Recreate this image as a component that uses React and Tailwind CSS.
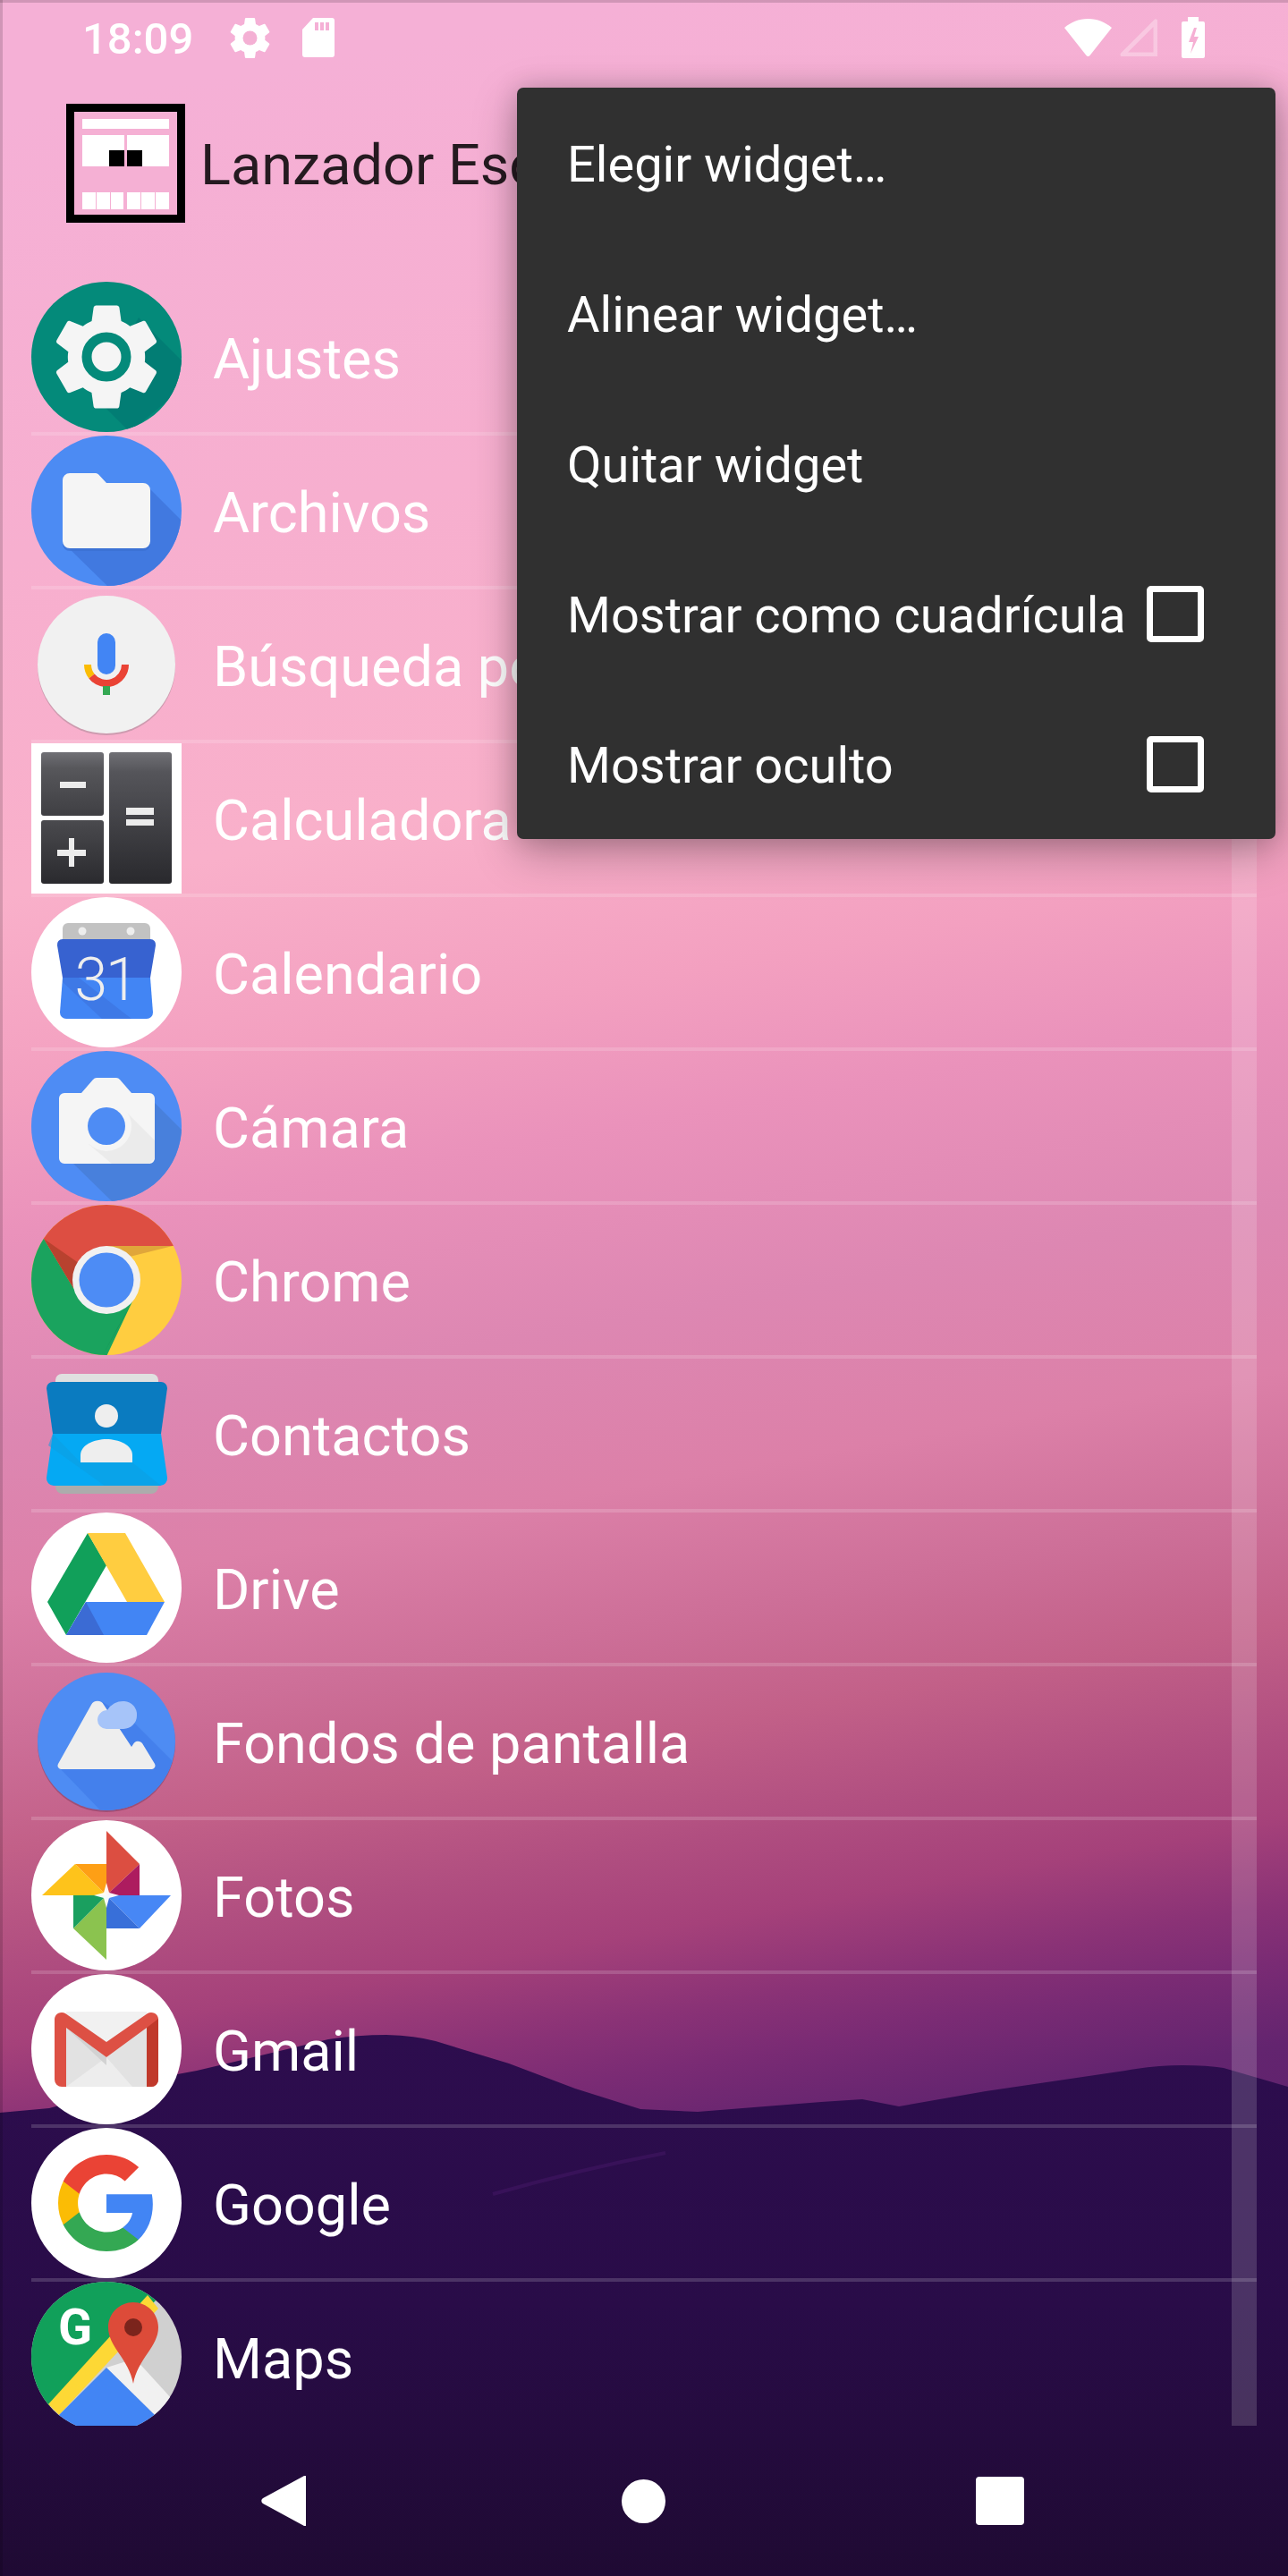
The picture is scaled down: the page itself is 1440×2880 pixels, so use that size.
const GEAR = 'M19.14,12.94c0.04-0.3,0.06-0.61,0.06-0.94c0-0.32-0.02-0.64-0.07-0.94l2.03-1.58c0.18-0.14,0.23-0.41,0.12-0.61l-1.92-3.32c-0.12-0.22-0.37-0.29-0.59-0.22l-2.39,0.96c-0.5-0.38-1.03-0.7-1.62-0.94L14.4,2.81c-0.04-0.24-0.24-0.41-0.48-0.41h-3.84c-0.24,0-0.43,0.17-0.47,0.41L9.25,5.35C8.66,5.59,8.12,5.92,7.63,6.29L5.24,5.33c-0.22-0.08-0.47,0-0.59,0.22L2.74,8.87C2.62,9.08,2.66,9.34,2.86,9.48l2.03,1.58C4.84,11.36,4.8,11.69,4.8,12s0.02,0.64,0.07,0.94l-2.03,1.58c-0.18,0.14-0.23,0.41-0.12,0.61l1.92,3.32c0.12,0.22,0.37,0.29,0.59,0.22l2.39-0.96c0.5,0.38,1.03,0.7,1.62,0.94l0.36,2.54c0.05,0.24,0.24,0.41,0.48,0.41h3.84c0.24,0,0.44-0.17,0.47-0.41l0.36-2.54c0.59-0.24,1.13-0.56,1.62-0.94l2.39,0.96c0.22,0.08,0.47,0,0.59-0.22l1.92-3.32c0.12-0.22,0.07-0.47-0.12-0.61L19.14,12.94z'

function Icon({ children, id, r = 84 }) {
  return (
    <svg viewBox="0 0 168 168" className="w-[168px] h-[168px] shrink-0">
      <defs>
        <clipPath id={id}>
          <circle cx="84" cy="84" r={r} />
        </clipPath>
      </defs>
      {children}
    </svg>
  )
}

function SettingsIcon() {
  return (
    <Icon id="c-settings">
      <circle cx="84" cy="84" r="84" fill="#048a7a" />
      <polygon points="120,40 168,88 168,120 110,168 72,130" fill="#027d74" clipPath="url(#c-settings)" />
      <path d={GEAR} transform="translate(12 12) scale(6)" fill="#f5f5f5" />
      <circle cx="84" cy="84" r="22" fill="none" stroke="#048a7a" strokeWidth="11" />
    </Icon>
  )
}

function FilesIcon() {
  return (
    <Icon id="c-files">
      <circle cx="84" cy="84" r="84" fill="#4c8bf3" />
      <polygon points="133,60 168,95 168,168 85,168 40,124" fill="#4179e0" clipPath="url(#c-files)" />
      <rect x="35" y="112" width="98" height="17" rx="8" fill="#3a6fd0" opacity=".7" />
      <path d="M43 42h29a4 4 0 0 1 3.2 1.6L84 53h41a8 8 0 0 1 8 8v57a8 8 0 0 1-8 8H43a8 8 0 0 1-8-8V50a8 8 0 0 1 8-8z" fill="#f5f5f5" />
    </Icon>
  )
}

function VoiceIcon() {
  return (
    <Icon id="c-voice">
      <circle cx="84" cy="86" r="77" fill="#a98a98" opacity=".55" />
      <circle cx="84" cy="84" r="77" fill="#f1f1f1" />
      <rect x="74" y="49" width="20" height="46" rx="10" fill="#4285f4" />
      <path d="M63 84a21 21 0 0 0 4.5 13" fill="none" stroke="#fbbc05" strokeWidth="8" />
      <path d="M67.5 97A21 21 0 0 0 105 84" fill="none" stroke="#ea4335" strokeWidth="8" />
      <rect x="80" y="108" width="8" height="10" fill="#34a853" />
    </Icon>
  )
}

function CalculatorIcon() {
  return (
    <Icon id="c-calc">
      <defs>
        <linearGradient id="k1" x1="0" y1="0" x2="0" y2="1">
          <stop offset="0" stopColor="#707075" />
          <stop offset=".25" stopColor="#57575b" />
          <stop offset="1" stopColor="#3f3f43" />
        </linearGradient>
        <linearGradient id="k2" x1="0" y1="0" x2="0" y2="1">
          <stop offset="0" stopColor="#4a4a4e" />
          <stop offset="1" stopColor="#2a2a2e" />
        </linearGradient>
        <linearGradient id="k3" x1="0" y1="0" x2="0" y2="1">
          <stop offset="0" stopColor="#707075" />
          <stop offset=".15" stopColor="#55555a" />
          <stop offset="1" stopColor="#29292d" />
        </linearGradient>
      </defs>
      <rect width="168" height="168" fill="#fff" />
      <rect x="11" y="10" width="70" height="71" rx="3" fill="url(#k1)" />
      <rect x="11" y="86" width="70" height="71" rx="3" fill="url(#k2)" />
      <rect x="87" y="10" width="70" height="147" rx="3" fill="url(#k3)" />
      <rect x="32" y="43" width="29" height="7" fill="#ececec" />
      <rect x="29" y="119" width="32" height="7" fill="#ececec" />
      <rect x="42" y="106" width="6" height="32" fill="#ececec" />
      <rect x="106" y="72" width="31" height="8" fill="#ececec" />
      <rect x="106" y="85" width="31" height="7" fill="#ececec" />
    </Icon>
  )
}

function CalendarIcon() {
  return (
    <Icon id="c-cal">
      <circle cx="84" cy="84" r="84" fill="#fff" />
      <path d="M41 29h86a6 6 0 0 1 6 6v14H35V35a6 6 0 0 1 6-6z" fill="#c2c2c2" />
      <circle cx="57" cy="38" r="4.5" fill="#eee" />
      <circle cx="111" cy="38" r="4.5" fill="#eee" />
      <path d="M35 47h98a6 6 0 0 1 6 7l-6 36H35l-6-36a6 6 0 0 1 6-7z" fill="#3762d0" />
      <path d="M35 90h98l3 39a7 7 0 0 1-7 7H39a7 7 0 0 1-7-7z" fill="#4285f4" />
      <polygon points="35,90 53,90 112,136 79,136 35,95" fill="#3e79e6" />
      <text x="83" y="115" textAnchor="middle" fontFamily="Roboto, sans-serif" fontWeight="300" fontSize="66" fill="#eeeeee" letterSpacing="-2">31</text>
    </Icon>
  )
}

function CameraIcon() {
  return (
    <Icon id="c-cam">
      <circle cx="84" cy="84" r="84" fill="#4e8cf4" />
      <polygon points="130,50 168,88 168,168 90,168 45,124" fill="#4880dc" clipPath="url(#c-cam)" />
      <path d="M56 47l13-15a6 6 0 0 1 4-2h22a6 6 0 0 1 4 2l13 15h20a6 6 0 0 1 6 6v67a6 6 0 0 1-6 6H37a6 6 0 0 1-6-6V53a6 6 0 0 1 6-6z" fill="#f5f5f5" />
      <polygon points="104,66 138,100 138,120 132,126 90,126 64,104" fill="#ebebeb" />
      <circle cx="84" cy="84" r="28" fill="#f5f5f5" />
      <circle cx="84" cy="84" r="21" fill="#4e8cf4" />
    </Icon>
  )
}

function ChromeIcon() {
  return (
    <Icon id="c-chrome">
      <g clipPath="url(#c-chrome)">
        <rect width="168" height="168" fill="#ffcd40" />
        <polygon points="-10,-10 178,-10 178,46 84,46 47,93 14,38 -10,38" fill="#dd4e42" />
        <polygon points="-10,38 14,38 47,93 84,122 113,108 80,178 -10,178" fill="#1aa35e" />
        <polygon points="14,38 47,93 60,70" fill="#b8422f" />
        <polygon points="84,46 158,46 110,58" fill="#e0a63a" />
        <polygon points="113,108 80,168 95,140" fill="#128a4e" />
      </g>
      <circle cx="84" cy="84" r="38" fill="#f1f1f1" />
      <circle cx="84" cy="84" r="30.5" fill="#4d8cf5" />
    </Icon>
  )
}

function ContactsIcon() {
  return (
    <Icon id="c-contacts">
      <path d="M34 17h101a7 7 0 0 1 7 7v10H27V24a7 7 0 0 1 7-7z" fill="#e0e0e0" />
      <path d="M27 130h115v13a8 8 0 0 1-8 8H35a8 8 0 0 1-8-8z" fill="#acacac" />
      <path d="M24 26h121a7 7 0 0 1 7 7l-7 51H24l-7-51a7 7 0 0 1 7-7z" fill="#0a7bc0" />
      <path d="M24 84h121l7 49a8 8 0 0 1-8 9H25a8 8 0 0 1-8-9z" fill="#05a9f3" />
      <polygon points="24,84 55,116 113,116 145,142 82,142 19,97" fill="#0d9fe0" opacity=".55" />
      <circle cx="84" cy="64" r="13" fill="#eee" />
      <path d="M55 116v-8c0-12 16-18 29-18s29 6 29 18v8z" fill="#eee" />
    </Icon>
  )
}

function DriveIcon() {
  return (
    <Icon id="c-drive">
      <circle cx="84" cy="84" r="84" fill="#fff" />
      <polygon points="63,23 84,59 39,137 18,100" fill="#11a05a" />
      <polygon points="63,23 105,23 149,100 107,100" fill="#ffcd40" />
      <polygon points="61,100 149,100 129,137 39,137" fill="#4285f4" />
      <polygon points="61,100 39,137 81,137" fill="#3b6bd4" />
    </Icon>
  )
}

function WallpapersIcon() {
  return (
    <Icon id="c-wall" r={77}>
      <circle cx="84" cy="86" r="77" fill="#7a3a60" opacity=".5" />
      <circle cx="84" cy="84" r="77" fill="#4e8cf3" />
      <polygon points="112,60 168,116 161,161 84,168 30,112 80,40" fill="#4480ec" clipPath="url(#c-wall)" />
      <path d="M67 43a8 8 0 0 1 14 0l31 47 2-3a6 6 0 0 1 10-1l14 23a4 4 0 0 1-3 6H33a4 4 0 0 1-3-6z" fill="#eeeeee" />
      <path d="M104 39a15 15 0 0 1 14 16 15 15 0 0 1-15 15H84a10 10 0 0 1-10-10 11 11 0 0 1 11-11 20 20 0 0 1 19-10z" fill="#a6c4f9" />
    </Icon>
  )
}

function PhotosIcon() {
  return (
    <Icon id="c-photos">
      <circle cx="84" cy="84" r="84" fill="#fff" />
      <polygon points="84,12 121,49 84,84" fill="#dc4e41" />
      <polygon points="121,49 121,84 84,84" fill="#ad1c5f" />
      <polygon points="12,84 49,49 84,84" fill="#fec31b" />
      <polygon points="49,49 84,49 84,84" fill="#fe9f15" />
      <polygon points="84,84 156,84 121,121" fill="#4787f5" />
      <polygon points="84,84 121,121 84,121" fill="#386fd9" />
      <polygon points="84,156 47,121 84,84" fill="#8bc34f" />
      <polygon points="47,121 47,84 84,84" fill="#1a9f5f" />
      <polygon points="84,70 87,81 98,84 87,87 84,98 81,87 70,84 81,81" fill="#fff" opacity=".95" />
    </Icon>
  )
}

function GmailIcon() {
  return (
    <Icon id="c-gmail">
      <circle cx="84" cy="84" r="84" fill="#fff" />
      <rect x="39" y="42" width="90" height="84" fill="#f1f1f1" />
      <polygon points="39,126 39,56 84,93 129,56 129,126" fill="#e2e2e2" />
      <polygon points="39,126 84,93 113,126" fill="#ededed" />
      <polygon points="39,60 84,93 84,102" fill="#d2d2d2" />
      <path d="M26 50a8 8 0 0 1 12-6l46 32 46-32a8 8 0 0 1 12 6v68a8 8 0 0 1-8 8h-5V60L84 93 39 60v66h-5a8 8 0 0 1-8-8z" fill="#dd5044" />
      <path d="M129 60l13-10v68a8 8 0 0 1-8 8h-5z" fill="#c0392b" />
    </Icon>
  )
}

function GoogleIcon() {
  return (
    <Icon id="c-google">
      <circle cx="84" cy="84" r="84" fill="#fff" />
      <g transform="translate(25.1 25.1) scale(2.4545)">
        <path fill="#4285f4" d="M45.12 24.5c0-1.56-.14-3.06-.4-4.5H24v8.51h11.84c-.51 2.75-2.06 5.08-4.39 6.64v5.52h7.11c4.16-3.83 6.56-9.47 6.56-16.17z" />
        <path fill="#34a853" d="M24 46c5.94 0 10.92-1.97 14.56-5.33l-7.11-5.52c-1.97 1.32-4.49 2.1-7.45 2.1-5.73 0-10.58-3.87-12.31-9.07H4.34v5.7C7.96 41.07 15.4 46 24 46z" />
        <path fill="#fbbc05" d="M11.69 28.18C11.25 26.86 11 25.45 11 24s.25-2.86.69-4.18v-5.7H4.34C2.85 17.09 2 20.45 2 24c0 3.55.85 6.91 2.34 9.88l7.35-5.7z" />
        <path fill="#ea4335" d="M24 10.75c3.23 0 6.13 1.11 8.41 3.29l6.31-6.31C34.91 4.18 29.93 2 24 2 15.4 2 7.96 6.93 4.34 14.12l7.35 5.7c1.73-5.2 6.58-9.07 12.31-9.07z" />
      </g>
    </Icon>
  )
}

function MapsIcon() {
  return (
    <Icon id="c-maps">
      <g clipPath="url(#c-maps)">
        <rect width="168" height="168" fill="#d0d0d0" />
        <polygon points="0,0 140,0 139,21 20,140 0,140" fill="#11a05a" />
        <polygon points="130,15 142,30 31,149 19,137" fill="#fdd835" />
        <polygon points="84,96 116,86 158,132 138,149" fill="#f1f1f1" />
        <polygon points="84,96 138,149 150,168 18,168 31,149" fill="#4285f4" />
      </g>
      <text x="49" y="70" textAnchor="middle" fontFamily="Roboto, sans-serif" fontWeight="700" fontSize="56" fill="#fff">G</text>
      <path d="M114 23c-15 0-28 12-28 28 0 22 23 35 28 63 5-28 28-41 28-63 0-16-13-28-28-28z" fill="#dd4b39" />
      <circle cx="114" cy="51" r="10" fill="#7b241c" />
    </Icon>
  )
}

const apps = [
  { name: 'Ajustes', Icon: SettingsIcon },
  { name: 'Archivos', Icon: FilesIcon },
  { name: 'Búsqueda por voz', Icon: VoiceIcon },
  { name: 'Calculadora', Icon: CalculatorIcon },
  { name: 'Calendario', Icon: CalendarIcon },
  { name: 'Cámara', Icon: CameraIcon },
  { name: 'Chrome', Icon: ChromeIcon },
  { name: 'Contactos', Icon: ContactsIcon },
  { name: 'Drive', Icon: DriveIcon },
  { name: 'Fondos de pantalla', Icon: WallpapersIcon },
  { name: 'Fotos', Icon: PhotosIcon },
  { name: 'Gmail', Icon: GmailIcon },
  { name: 'Google', Icon: GoogleIcon },
  { name: 'Maps', Icon: MapsIcon },
]

const menuItems = [
  { label: 'Elegir widget…' },
  { label: 'Alinear widget…' },
  { label: 'Quitar widget' },
  { label: 'Mostrar como cuadrícula', check: true },
  { label: 'Mostrar oculto', check: true },
]

function Wallpaper() {
  return (
    <div className="absolute inset-0 bg-[linear-gradient(170deg,#f5b0d6_4%,#f7afcf_20%,#f9b0ca_32%,#f3a0c0_39%,#ea92bb_44%,#dd87b2_51%,#dc80a8_57%,#cd6f98_62%,#c26088_66%,#b04e80_70%,#a5417a_73%,#8a3276_76%,#7a2b74_78%,#63246f_81%,#4a1c60_100%)]">
      <svg viewBox="0 2260 1440 620" className="absolute left-0 bottom-0 w-[1440px] h-[620px]">
        <defs>
          <linearGradient id="hill" x1="0" y1="0" x2="0" y2="1">
            <stop offset="0" stopColor="#2d0d4e" />
            <stop offset=".5" stopColor="#290c48" />
            <stop offset="1" stopColor="#1f0a33" />
          </linearGradient>
        </defs>
        <path
          d="M0 2362L55 2357L193 2320L220 2315L367 2280Q400 2275 432 2275Q465 2276 487 2282L569 2307L643 2335L716 2358L780 2361L918 2350L964 2347L1005 2355L1102 2338L1258 2315Q1290 2309 1322 2309Q1350 2309 1368 2312L1440 2333V2880H0Z"
          fill="url(#hill)"
        />
        <path d="M551 2453Q650 2425 744 2407" fill="none" stroke="#3f1660" strokeWidth="4" opacity=".7" />
      </svg>
    </div>
  )
}

function StatusBar() {
  return (
    <div className="h-[84px] flex items-center justify-between pl-[92px] pr-[93px] text-white">
      <div className="flex items-center">
        <span className="text-[49px] leading-none font-medium w-[120px] pt-[3px]">18:09</span>
        <svg viewBox="2.4 2.4 19.2 19.2" className="w-[45px] h-[45px] ml-[45px]">
          <path d={GEAR} fill="#fff" />
          <circle cx="12" cy="12" r="3.4" fill="#f4b0d4" />
        </svg>
        <svg viewBox="0 0 36 44" className="w-[36px] h-[44px] ml-[36px]">
          <path
            fillRule="evenodd"
            d="M12 0H33a3 3 0 0 1 3 3V41a3 3 0 0 1-3 3H3a3 3 0 0 1-3-3V13ZM14 5V14H18V5ZM20 5V14H24V5ZM26 5V14H30V5Z"
            fill="#fff"
          />
        </svg>
      </div>
      <div className="flex items-center">
        <svg viewBox="0 0 53 42" className="w-[53px] h-[42px]">
          <path d="M0 10C7 4 16 0 26.5 0S46 4 53 10L28.5 41a2.5 2.5 0 0 1-4 0Z" fill="#fff" />
        </svg>
        <svg viewBox="0 0 42 42" className="w-[42px] h-[42px] ml-[9px]">
          <path d="M40 3V40H3Z" fill="none" stroke="#fff" strokeOpacity=".3" strokeWidth="5" strokeLinejoin="round" />
        </svg>
        <svg viewBox="0 0 26 46" className="w-[26px] h-[46px] ml-[27px]">
          <path
            fillRule="evenodd"
            d="M7 0H19V5H24a2 2 0 0 1 2 2V44a2 2 0 0 1-2 2H2a2 2 0 0 1-2-2V7a2 2 0 0 1 2-2H7ZM14 12L8 28H13L10 41L19 22H14L17 12Z"
            fill="#fff"
          />
        </svg>
      </div>
    </div>
  )
}

function AppLogo() {
  return (
    <div className="w-[133px] h-[133px] border-[9px] border-black shrink-0 flex flex-col pt-[8px] px-[9px] bg-[#f5b0d4]">
      <div className="h-[11px] bg-white" />
      <div className="flex gap-[3px] mt-[7px] h-[35px]">
        <div className="flex-1 bg-white flex justify-end items-end">
          <div className="w-[17px] h-[18px] bg-black" />
        </div>
        <div className="flex-1 bg-white flex items-end">
          <div className="w-[17px] h-[18px] bg-black" />
        </div>
      </div>
      <div className="flex gap-[1px] mt-[29px] h-[19px]">
        <div className="flex-1 bg-white" />
        <div className="flex-1 bg-white" />
        <div className="flex-1 bg-white mr-[3px]" />
        <div className="flex-1 bg-white" />
        <div className="flex-1 bg-white" />
        <div className="flex-1 bg-white" />
      </div>
    </div>
  )
}

function PopupMenu() {
  return (
    <div className="absolute left-[578px] top-[98px] w-[848px] rounded-[7px] bg-[#303030] shadow-[0_16px_50px_rgba(0,0,0,0.28),0_0_28px_rgba(0,0,0,0.16)] z-10">
      {menuItems.map((item) => (
        <div key={item.label} className="h-[168px] pl-[56px] pr-[80px] flex items-center justify-between text-white text-[56px] leading-none">
          <span className="pt-[4px]">{item.label}</span>
          {item.check && <div className="w-[64px] h-[63px] border-[7px] border-white rounded-[5px]" />}
        </div>
      ))}
    </div>
  )
}

function NavBar() {
  return (
    <div className="h-[168px] shrink-0 flex items-center pl-[292px]">
      <svg viewBox="0 0 50 56" className="w-[50px] h-[56px]">
        <path d="M50 1V55a1 1 0 0 1-2 1L2 31a3.5 3.5 0 0 1 0-6L48 0a1 1 0 0 1 2 1Z" fill="#fff" />
      </svg>
      <div className="w-[49px] h-[49px] rounded-full bg-white ml-[353px]" />
      <div className="w-[54px] h-[54px] rounded-[4px] bg-white ml-[347px]" />
    </div>
  )
}

export default function App() {
  return (
    <div className="relative w-[1440px] h-[2880px] overflow-hidden flex flex-col font-[Roboto,sans-serif]">
      <Wallpaper />
      <div className="absolute left-0 top-0 w-full h-[3px] bg-black/15" />
      <div className="absolute left-0 top-0 w-[3px] h-full bg-black/15" />

      <div className="relative flex flex-col flex-1 min-h-0">
        <StatusBar />
        <div className="h-[196px] shrink-0 flex items-center pl-[74px]">
          <AppLogo />
          <span className="ml-[17px] pt-[4px] text-[63px] leading-none text-black/85 whitespace-nowrap">Lanzador Escritorio</span>
        </div>

        <div className="relative flex-1 min-h-0 overflow-hidden px-[35px] pt-[35px]">
          {apps.map(({ name, Icon: AppIcon }, i) => (
            <div key={name}>
              {i > 0 && <div className="h-[4px] bg-white/[0.16]" />}
              <div className="h-[168px] flex items-center">
                <AppIcon />
                <span className="ml-[35px] pt-[4px] text-[63px] leading-none text-white whitespace-nowrap">{name}</span>
              </div>
            </div>
          ))}
          <div className="absolute right-[35px] top-[35px] bottom-0 w-[28px] bg-white/[0.16]" />
        </div>

        <NavBar />
      </div>

      <PopupMenu />
    </div>
  )
}
